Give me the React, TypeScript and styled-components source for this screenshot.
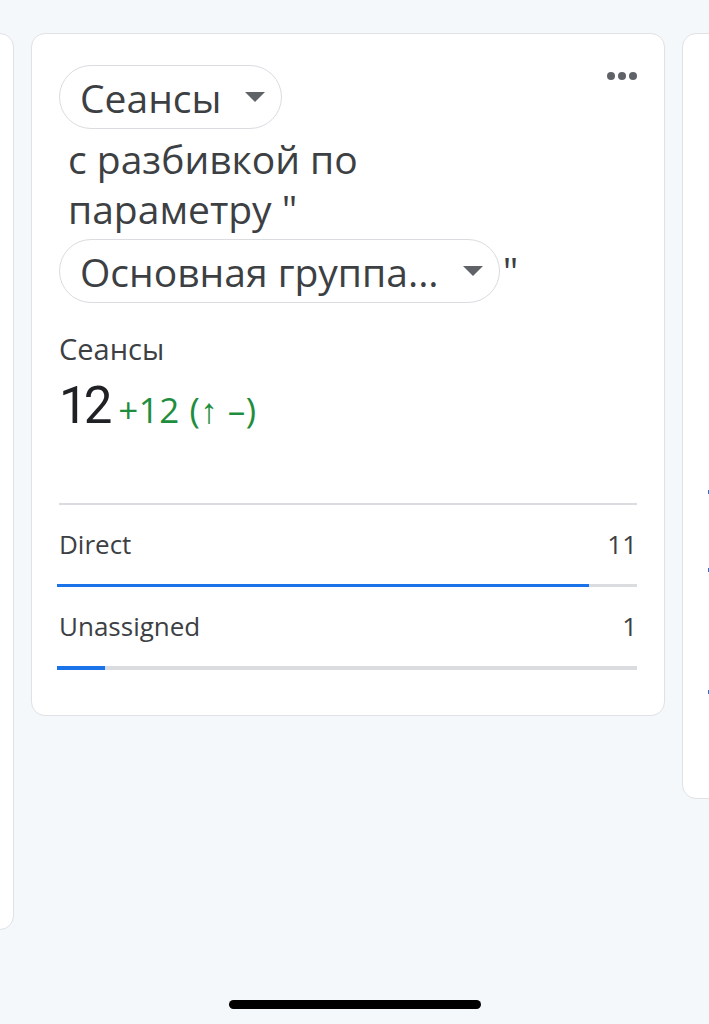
import React from "react";
import styled, { createGlobalStyle } from "styled-components";

const GlobalStyle = createGlobalStyle`
  html, body {
    margin: 0;
    padding: 0;
    background: #f5f8fa;
    overflow: hidden;
  }
  body {
    font-family: "Open Sans", Roboto, "Noto Sans", Arial, sans-serif;
  }
`;

const Screen = styled.div`
  position: relative;
  width: 709px;
  height: 1024px;
  overflow: hidden;
  background: #f5f8fa;
`;

const Track = styled.div`
  display: flex;
  align-items: flex-start;
  gap: 17px;
  padding-top: 33px;
  margin-left: -620px;
`;

const Card = styled.section<{ $height?: number }>`
  flex: 0 0 634px;
  box-sizing: border-box;
  background: #ffffff;
  border: 1.5px solid #dfe1e5;
  border-radius: 14px;
  ${(p) => (p.$height ? `height: ${p.$height}px;` : "")}
  padding: 31px 27px 45px 27px;
`;

const Header = styled.div`
  display: flex;
  justify-content: space-between;
  align-items: flex-start;
`;

const Title = styled.div`
  display: flex;
  flex-wrap: wrap;
  align-items: center;
  row-gap: 5px;
  width: 470px;
  font-size: 39px;
  line-height: 50px;
  color: #3c4043;
`;

const Chip = styled.button`
  display: inline-flex;
  align-items: center;
  gap: 24px;
  height: 64px;
  box-sizing: border-box;
  padding: 0 16px 0 20px;
  border: 1.5px solid #dadce0;
  border-radius: 32px;
  background: #ffffff;
  font-family: inherit;
  font-size: 39px;
  color: #3c4043;
  white-space: nowrap;
`;

const TitleText = styled.span`
  padding-left: 9px;
`;

const Quote = styled.span`
  padding-left: 3px;
`;

const Caret = () => (
  <svg width="20" height="10" viewBox="0 0 20 10">
    <path d="M0 0 L20 0 L10 10 Z" fill="#5f6368" />
  </svg>
);

const MenuButton = styled.button`
  display: flex;
  gap: 3px;
  border: 0;
  background: none;
  padding: 0;
  margin-top: 7px;
`;

const Dot = styled.span`
  width: 8px;
  height: 8px;
  border-radius: 50%;
  background: #5f6368;
`;

const MetricLabel = styled.div`
  margin-top: 31px;
  font-size: 29px;
  line-height: 30px;
  color: #3c4043;
`;

const ValueRow = styled.div`
  display: flex;
  align-items: baseline;
  gap: 10px;
  margin-top: 12px;
  line-height: 60px;
`;

const Value = styled.span`
  font-family: Roboto, "Open Sans", sans-serif;
  font-size: 51px;
  letter-spacing: -4px;
  color: #202124;
`;

const Delta = styled.span`
  font-size: 35px;
  letter-spacing: 0.5px;
  color: #1e8e3e;
`;

const Divider = styled.hr`
  margin: 63px 0 0 0;
  border: 0;
  height: 1.5px;
  background: #dadce0;
`;

const List = styled.div`
  display: flex;
  flex-direction: column;
  padding-top: 25px;
  gap: 25px;
`;

const Row = styled.div<{ $extra?: number }>`
  display: flex;
  flex-direction: column;
  gap: 26px;
  margin-top: ${(p) => p.$extra ?? 0}px;
`;

const RowHead = styled.div`
  display: flex;
  justify-content: space-between;
  font-size: 26px;
  line-height: 28px;
  color: #3c4043;
`;

const Bar = styled.div`
  height: 3.5px;
  margin-left: -2px;
  background: #dadce0;
`;

const BarFill = styled.div`
  height: 100%;
  background: #1a73e8;
`;

const SideList = styled.div`
  display: flex;
  flex-direction: column;
  padding-top: 371px;
  gap: 20.5px;
`;

const rows = [
  { label: "Direct", value: 11 },
  { label: "Unassigned", value: 1 },
];

const total = 12;

const sideRows = [
  { w: 40, extra: 0 },
  { w: 30, extra: 0 },
  { w: 10, extra: 44 },
];

const HomeIndicator = styled.div`
  position: absolute;
  left: 229px;
  top: 1000px;
  width: 252px;
  height: 9px;
  border-radius: 5px;
  background: #000000;
`;

export default function App() {
  return (
    <>
      <GlobalStyle />
      <Screen>
        <Track>
          <Card $height={897} />
          <Card>
            <Header>
              <Title>
                <Chip>
                  Сеансы
                  <Caret />
                </Chip>
                <TitleText>с разбивкой по параметру "</TitleText>
                <Chip>
                  Основная группа...
                  <Caret />
                </Chip>
                <Quote>"</Quote>
              </Title>
              <MenuButton aria-label="Ещё">
                <Dot />
                <Dot />
                <Dot />
              </MenuButton>
            </Header>
            <MetricLabel>Сеансы</MetricLabel>
            <ValueRow>
              <Value>12</Value>
              <Delta>+12 (↑ –)</Delta>
            </ValueRow>
            <Divider />
            <List>
              {rows.map((r) => (
                <Row key={r.label}>
                  <RowHead>
                    <span>{r.label}</span>
                    <span>{r.value}</span>
                  </RowHead>
                  <Bar>
                    <BarFill style={{ width: `${(r.value / total) * 100}%` }} />
                  </Bar>
                </Row>
              ))}
            </List>
          </Card>
          <Card $height={766}>
            <SideList>
              {sideRows.map((r, i) => (
                <Row key={i} $extra={r.extra}>
                  <RowHead>
                    <span>&nbsp;</span>
                  </RowHead>
                  <Bar>
                    <BarFill style={{ width: `${r.w}%` }} />
                  </Bar>
                </Row>
              ))}
            </SideList>
          </Card>
        </Track>
        <HomeIndicator />
      </Screen>
    </>
  );
}
